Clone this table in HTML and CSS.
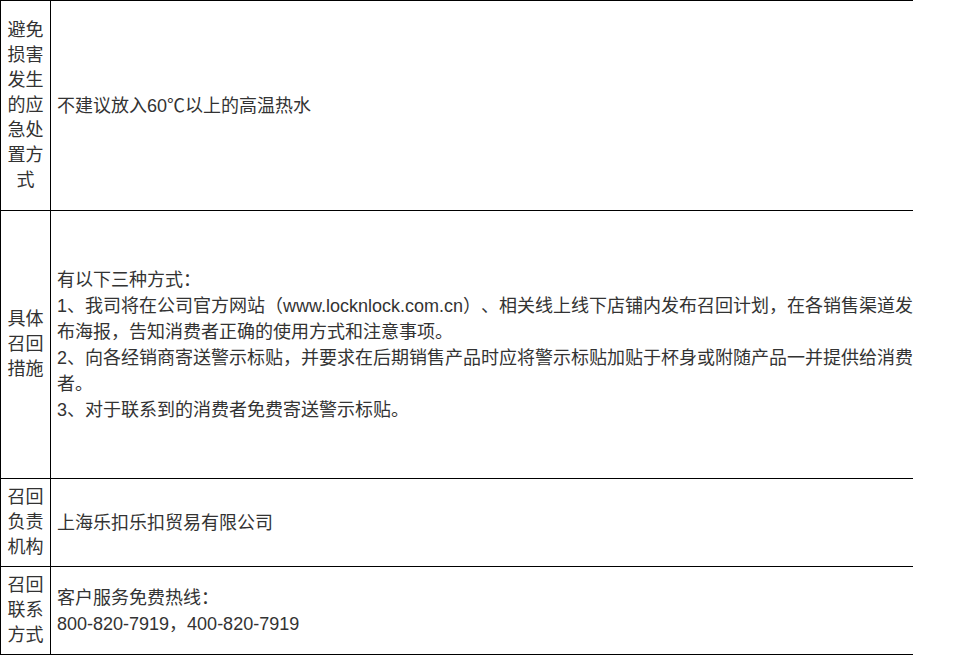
FILE: index.html
```html
<!DOCTYPE html>
<html lang="zh-CN">
<head>
<meta charset="utf-8">
<title>召回信息</title>
<link rel="stylesheet" href="styles.css">
</head>
<body>
<div class="clip">
  <table class="recall">
    <colgroup>
      <col class="c-label">
      <col class="c-body">
    </colgroup>
    <tr class="r1">
      <td class="label">避免损害发生的应急处置方式</td>
      <td class="body">不建议放入60℃以上的高温热水</td>
    </tr>
    <tr class="r2">
      <td class="label">具体召回措施</td>
      <td class="body">有以下三种方式：<br>1、我司将在公司官方网站（www.locknlock.com.cn）、相关线上线下店铺内发布召回计划，在各销售渠道发布海报，告知消费者正确的使用方式和注意事项。<br>2、向各经销商寄送警示标贴，并要求在后期销售产品时应将警示标贴加贴于杯身或附随产品一并提供给消费者。<br>3、对于联系到的消费者免费寄送警示标贴。</td>
    </tr>
    <tr class="r3">
      <td class="label">召回负责机构</td>
      <td class="body">上海乐扣乐扣贸易有限公司</td>
    </tr>
    <tr class="r4">
      <td class="label">召回联系方式</td>
      <td class="body">客户服务免费热线：<br>800-820-7919，400-820-7919</td>
    </tr>
  </table>
</div>
</body>
</html>
```

FILE: styles.css
```css
html, body {
  margin: 0;
  padding: 0;
  background: #fff;
}

.clip {
  width: 913px;
  overflow: hidden;
}

.recall {
  border-collapse: collapse;
  table-layout: fixed;
  width: 930px;
  font-family: "Liberation Sans", "Noto Sans CJK SC", sans-serif;
  font-size: 18px;
  color: #333;
  text-spacing-trim: space-all;
}

.c-label { width: 50px; }
.c-body { width: 880px; }

.recall td {
  border: 1px solid #000;
  vertical-align: middle;
  padding: 0 6px;
}

.label {
  text-align: center;
  line-height: 25px;
}

.body {
  text-align: left;
  line-height: 26px;
}

.r1 { height: 210px; }
.r2 { height: 268px; }
.r3 { height: 88px; }
.r4 { height: 88px; }
```
